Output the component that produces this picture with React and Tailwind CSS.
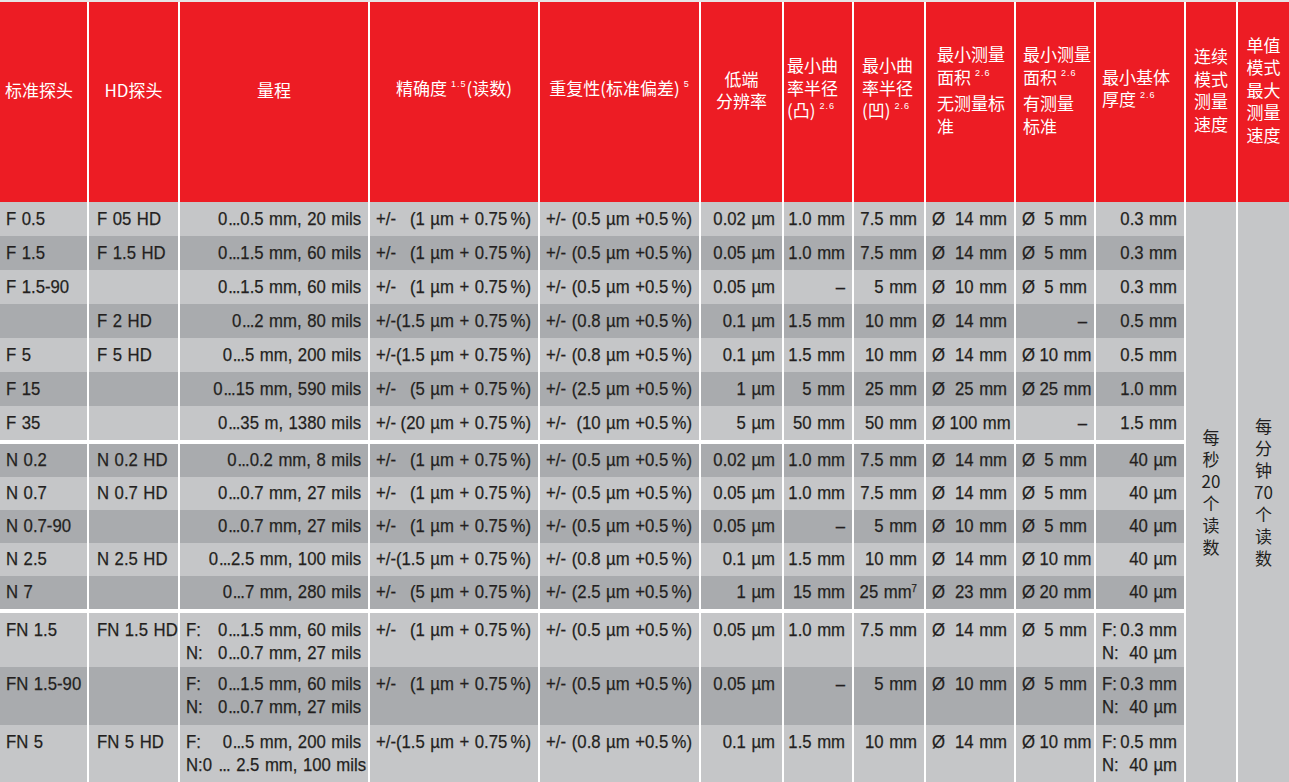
import React from 'react'

const LIGHT = 'bg-[#c5c6c8]'
const DARK = 'bg-[#a9abae]'
const T = '\u2009'

// alignment for columns 1..11 when the value is plain text
const ALIGN = ['l', 'l', 'r', 'r', 'r', 'r', 'r', 'r', 'r', 'r', 'r']

const acc = (a) => ['+/-', `(${a} µm + 0.75${T}%)`]
const rep = (a) => ['+/-', `(${a} µm +0.5${T}%)`]

const F_ROWS = [
  ['F 0.5', 'F 05 HD', '0…0.5 mm, 20 mils', acc('1'), rep('0.5'), '0.02 µm', '1.0 mm', '7.5 mm', ['Ø', '14 mm'], ['Ø', '5 mm'], '0.3 mm'],
  ['F 1.5', 'F 1.5 HD', '0…1.5 mm, 60 mils', acc('1'), rep('0.5'), '0.05 µm', '1.0 mm', '7.5 mm', ['Ø', '14 mm'], ['Ø', '5 mm'], '0.3 mm'],
  ['F 1.5-90', '', '0…1.5 mm, 60 mils', acc('1'), rep('0.5'), '0.05 µm', '–', '5 mm', ['Ø', '10 mm'], ['Ø', '5 mm'], '0.3 mm'],
  ['', 'F 2 HD', '0…2 mm, 80 mils', acc('1.5'), rep('0.8'), '0.1 µm', '1.5 mm', '10 mm', ['Ø', '14 mm'], '–', '0.5 mm'],
  ['F 5', 'F 5 HD', '0…5 mm, 200 mils', acc('1.5'), rep('0.8'), '0.1 µm', '1.5 mm', '10 mm', ['Ø', '14 mm'], ['Ø', '10 mm'], '0.5 mm'],
  ['F 15', '', '0…15 mm, 590 mils', acc('5'), rep('2.5'), '1 µm', '5 mm', '25 mm', ['Ø', '25 mm'], ['Ø', '25 mm'], '1.0 mm'],
  ['F 35', '', '0…35 m, 1380 mils', acc('20'), rep('10'), '5 µm', '50 mm', '50 mm', ['Ø', '100 mm'], '–', '1.5 mm'],
]

const N_ROWS = [
  ['N 0.2', 'N 0.2 HD', '0…0.2 mm, 8 mils', acc('1'), rep('0.5'), '0.02 µm', '1.0 mm', '7.5 mm', ['Ø', '14 mm'], ['Ø', '5 mm'], '40 µm'],
  ['N 0.7', 'N 0.7 HD', '0…0.7 mm, 27 mils', acc('1'), rep('0.5'), '0.05 µm', '1.0 mm', '7.5 mm', ['Ø', '14 mm'], ['Ø', '5 mm'], '40 µm'],
  ['N 0.7-90', '', '0…0.7 mm, 27 mils', acc('1'), rep('0.5'), '0.05 µm', '–', '5 mm', ['Ø', '10 mm'], ['Ø', '5 mm'], '40 µm'],
  ['N 2.5', 'N 2.5 HD', '0…2.5 mm, 100 mils', acc('1.5'), rep('0.8'), '0.1 µm', '1.5 mm', '10 mm', ['Ø', '14 mm'], ['Ø', '10 mm'], '40 µm'],
  ['N 7', '', '0…7 mm, 280 mils', acc('5'), rep('2.5'), '1 µm', '15 mm', '25 mm^7', ['Ø', '23 mm'], ['Ø', '20 mm'], '40 µm'],
]

const fn = (f, n) => ({ lines: [['F:', f], ['N:', n]] })

const FN_ROWS = [
  ['FN 1.5', 'FN 1.5 HD', fn('0…1.5 mm, 60 mils', '0…0.7 mm, 27 mils'), acc('1'), rep('0.5'), '0.05 µm', '1.0 mm', '7.5 mm', ['Ø', '14 mm'], ['Ø', '5 mm'], fn('0.3 mm', '40 µm')],
  ['FN 1.5-90', '', fn('0…1.5 mm, 60 mils', '0…0.7 mm, 27 mils'), acc('1'), rep('0.5'), '0.05 µm', '–', '5 mm', ['Ø', '10 mm'], ['Ø', '5 mm'], fn('0.3 mm', '40 µm')],
  ['FN 5', 'FN 5 HD', fn('0…5 mm, 200 mils', '0 … 2.5 mm, 100 mils'), acc('1.5'), rep('0.8'), '0.1 µm', '1.5 mm', '10 mm', ['Ø', '14 mm'], ['Ø', '10 mm'], fn('0.5 mm', '40 µm')],
]

// narrow ellipsis and footnote marks inside a value
function Txt({ s }) {
  const [main, note] = s.split('^')
  const parts = main.split('…')
  return (
    <span>
      {parts.map((p, i) => (
        <React.Fragment key={i}>
          {i > 0 && <span className="tracking-[-1px] px-[1px]">...</span>}
          {p}
        </React.Fragment>
      ))}
      {note && <span className="text-[11px] relative -top-[6px]">{note}</span>}
    </span>
  )
}

function Sup({ children }) {
  return (
    <span className="text-[9px] relative -top-[8px] ml-[4px] tracking-[1px] font-['Liberation_Sans',sans-serif]">
      {children}
    </span>
  )
}

// the table face is a condensed grotesque: Liberation Sans squeezed horizontally
const SQUEEZE = 'w-[113.64%] shrink-0 origin-left scale-x-[0.88] whitespace-nowrap [word-spacing:1px]'

function Pair({ a, b }) {
  return (
    <div className={`flex justify-between ${a === 'Ø' ? 'gap-[5px]' : 'gap-0'}`}>
      <Txt s={a} />
      <Txt s={b} />
    </div>
  )
}

function Cell({ value, col, bg, tall }) {
  const pad = col === 1 ? 'pl-[8px] pr-[7px]' : 'pl-[6px] pr-[7px]'
  if (value && typeof value === 'object' && value.lines) {
    return (
      <div className={`${bg} ${pad} flex items-start pt-[5px]`}>
        <div className={`${SQUEEZE} flex flex-col leading-[23px]`}>
          {value.lines.map((l, i) => <Pair key={i} a={l[0]} b={l[1]} />)}
        </div>
      </div>
    )
  }
  const box = `${bg} ${pad} flex ${tall ? 'items-start pt-[5px] leading-[23px]' : 'items-center'}`
  if (Array.isArray(value)) {
    return (
      <div className={box}>
        <div className={SQUEEZE}>
          <Pair a={value[0]} b={value[1]} />
        </div>
      </div>
    )
  }
  return (
    <div className={box}>
      <div className={`${SQUEEZE} flex ${ALIGN[col] === 'r' ? 'justify-end' : 'justify-start'}`}>
        <Txt s={value} />
      </div>
    </div>
  )
}

function Row({ cells, bg, tall }) {
  return cells.map((v, i) => <Cell key={i} value={v} col={i} bg={bg} tall={tall} />)
}

const HEAD = "bg-[#ed1c24] text-white flex items-center pb-[24px] text-[17px] leading-[22.5px] font-['Noto_Sans_CJK_SC',sans-serif] [-webkit-text-stroke:0]"
const SPEED = "row-start-2 row-span-17 bg-[#c5c6c8] flex items-center justify-center text-center text-[17px] leading-[22px] font-['Noto_Sans_CJK_SC',sans-serif] [-webkit-text-stroke:0]"

export default function App() {
  return (
    <div className="w-[1289px] h-[782px] overflow-hidden bg-[#e6e6e6] pt-[2px]">
      <div className="grid grid-cols-[87px_89px_188px_168px_159px_81px_68px_70px_88px_78px_88px_50px_51px] grid-rows-[200px_repeat(7,34px)_4px_repeat(5,33px)_4px_54px_58px_57px] gap-x-[2px] bg-white text-[19px] text-[#231f20] [-webkit-text-stroke:0.25px_#231f20] font-['Liberation_Sans',Arial,sans-serif]">
        <div className={`${HEAD} pl-[5px]`}>标准探头</div>
        <div className={`${HEAD} justify-center`}>HD探头</div>
        <div className={`${HEAD} justify-center`}>量程</div>
        <div className={`${HEAD} justify-center`}>
          <span>精确度<Sup>1.5</Sup>(读数)</span>
        </div>
        <div className={`${HEAD} justify-center`}>
          <span>重复性(标准偏差)<Sup>5</Sup></span>
        </div>
        <div className={`${HEAD} justify-center text-center`}>
          <span>低端<br />分辨率</span>
        </div>
        <div className={`${HEAD} pl-[3px]`}>
          <span>最小曲<br />率半径<br />(凸)<Sup>2.6</Sup></span>
        </div>
        <div className={`${HEAD} pl-[8px]`}>
          <span>最小曲<br />率半径<br />(凹)<Sup>2.6</Sup></span>
        </div>
        <div className={`${HEAD} pl-[11px]`}>
          <span>最小测量<br />面积<Sup>2.6</Sup><br />无测量标<br />准</span>
        </div>
        <div className={`${HEAD} pl-[7px]`}>
          <span>最小测量<br />面积<Sup>2.6</Sup><br />有测量<br />标准</span>
        </div>
        <div className={`${HEAD} pl-[6px]`}>
          <span>最小基体<br />厚度<Sup>2.6</Sup></span>
        </div>
        <div className={`${HEAD} justify-center text-center`}>
          <span>连续<br />模式<br />测量<br />速度</span>
        </div>
        <div className={`${HEAD} justify-center text-center`}>
          <span>单值<br />模式<br />最大<br />测量<br />速度</span>
        </div>

        {/* speed columns, merged over all data rows */}
        <div className={`col-start-12 ${SPEED}`}>
          <span>每<br />秒<br />20<br />个<br />读<br />数</span>
        </div>
        <div className={`col-start-13 ${SPEED}`}>
          <span>每<br />分<br />钟<br />70<br />个<br />读<br />数</span>
        </div>

        {F_ROWS.map((r, i) => <Row key={'f' + i} cells={r} bg={i % 2 ? DARK : LIGHT} />)}
        <div className="col-span-11 bg-white" />
        {N_ROWS.map((r, i) => <Row key={'n' + i} cells={r} bg={i % 2 ? LIGHT : DARK} />)}
        <div className="col-span-11 bg-white" />
        {FN_ROWS.map((r, i) => <Row key={'fn' + i} cells={r} bg={i % 2 ? DARK : LIGHT} tall />)}
      </div>
    </div>
  )
}
